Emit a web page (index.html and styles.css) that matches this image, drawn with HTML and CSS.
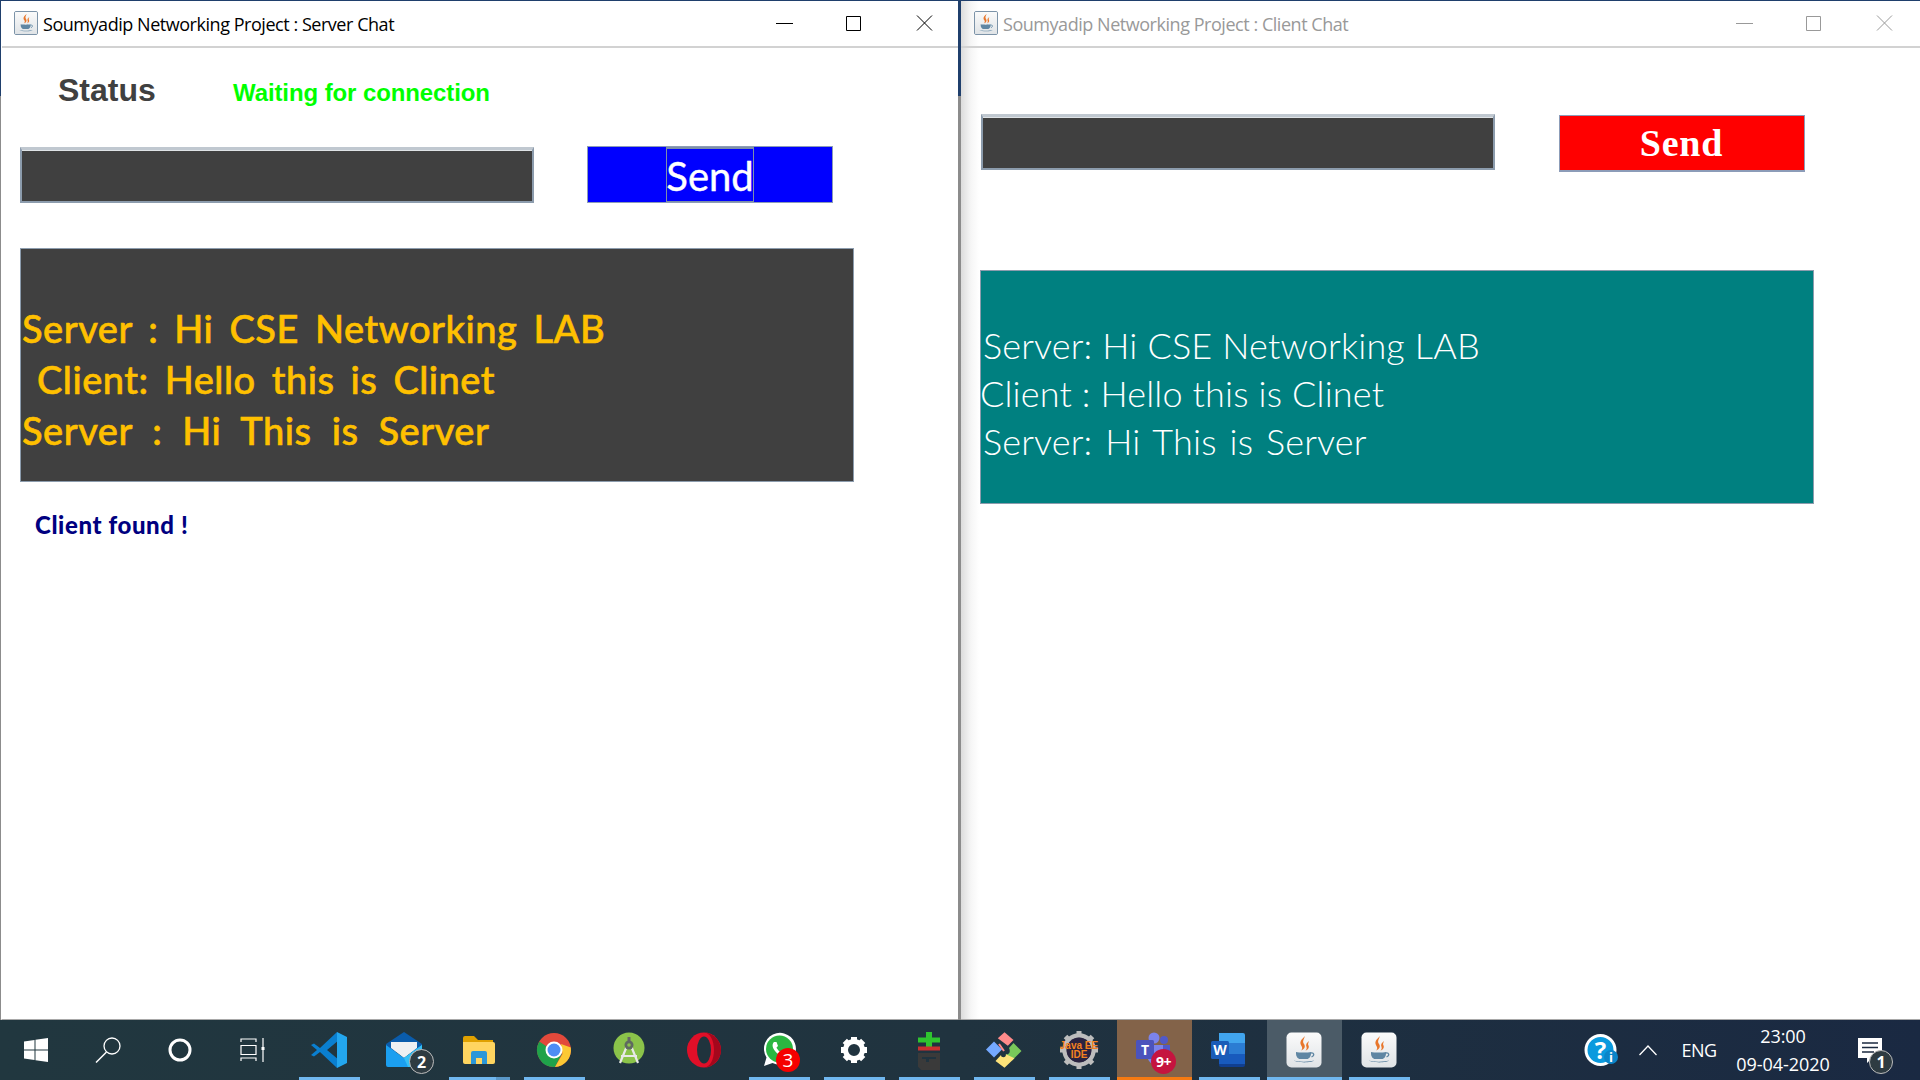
FILE: index.html
```html
<!DOCTYPE html>
<html lang="en">
<head>
<meta charset="utf-8">
<title>Soumyadip Networking Project</title>
<link rel="stylesheet" href="styles.css">
</head>
<body>
<svg class="defs" width="0" height="0" aria-hidden="true">
  <defs>
    <linearGradient id="javaBg" x1="0" y1="0" x2="0" y2="1"><stop offset="0" stop-color="#fbfbfb"/><stop offset="1" stop-color="#dfe3e6"/></linearGradient>
    <symbol id="java" viewBox="0 0 36 36">
      <rect x="0.5" y="0.5" width="35" height="35" rx="5" fill="url(#javaBg)"/>
      <path d="M19 4c-4 4-6 6-3.500 10 1 1.500 1 3-.5 4.500 3-1 5-3.500 3-6.500-2-2.500 0-5 1-8z" fill="#e8762b"/>
      <path d="M23 9c-2.500 2-3.500 3.500-2.500 6 .5 1.500 0 2.500-1 3.500 2.500-.5 4-3 3-5-1-1.500 0-3 .5-4.500z" fill="#e8762b"/>
      <path d="M10 20c3 .8 12 .8 15 0v1.500c0 3-2 5.500-4 5.500h-7c-2 0-4-2.500-4-5.500z" fill="#5f86a3"/>
      <path d="M25 21c3-.5 4 2.500.5 4" fill="none" stroke="#5f86a3" stroke-width="1.300"/>
      <path d="M8 28.500c4 1.500 15 1.500 20 0-2 2.500-17 2.500-20 0z" fill="#5f86a3"/>
    </symbol>
  </defs>
</svg>

<div class="screen">
  <main class="windows">
    <section class="window window-server">
      <header class="titlebar">
        <span class="app-icon"><svg width="24" height="24"><use href="#java"/></svg></span>
        <h1 class="title">Soumyadip Networking Project : Server Chat</h1>
        <div class="controls">
          <svg width="17" height="16" viewBox="0 0 17 16"><path d="M0 8.500h17" stroke="currentColor" fill="none"/></svg>
          <svg width="17" height="16" viewBox="0 0 17 16"><path d="M.5 1.500h14v14H.5z" stroke="currentColor" fill="none"/></svg>
          <svg width="17" height="16" viewBox="0 0 17 16"><path d="M1 .5l15 15M16 .5l-15 15" stroke="currentColor" fill="none"/></svg>
        </div>
      </header>
      <div class="status-row">
        <span class="status-label">Status</span>
        <span class="status-value">Waiting for connection</span>
      </div>
      <div class="send-row">
        <div class="field"></div>
        <button class="send send-blue" type="button"><span class="focus">Send</span></button>
      </div>
      <div class="log log-dark">
        <p class="line">Server : Hi CSE Networking LAB</p>
        <p class="line line-indent">Client: Hello this is Clinet</p>
        <p class="line line-wide">Server : Hi This is Server</p>
      </div>
      <p class="found">Client found !</p>
    </section>

    <section class="window window-client">
      <header class="titlebar">
        <span class="app-icon"><svg width="24" height="24"><use href="#java"/></svg></span>
        <h1 class="title">Soumyadip Networking Project : Client Chat</h1>
        <div class="controls">
          <svg width="17" height="16" viewBox="0 0 17 16"><path d="M0 8.500h17" stroke="currentColor" fill="none"/></svg>
          <svg width="17" height="16" viewBox="0 0 17 16"><path d="M.5 1.500h14v14H.5z" stroke="currentColor" fill="none"/></svg>
          <svg width="17" height="16" viewBox="0 0 17 16"><path d="M1 .5l15 15M16 .5l-15 15" stroke="currentColor" fill="none"/></svg>
        </div>
      </header>
      <div class="send-row send-row-client">
        <div class="field"></div>
        <button class="send send-red" type="button">Send</button>
      </div>
      <div class="log log-teal">
        <p class="line">Server: Hi CSE Networking LAB</p>
        <p class="line line-flush">Client : Hello this is Clinet</p>
        <p class="line line-wide">Server: Hi This is Server</p>
      </div>
    </section>
  </main>

  <footer class="taskbar">
    <div class="sys">
      <svg width="24" height="24" viewBox="0 0 24 24"><path d="M0 3.500L10.500 2v9.500H0zM11.500 1.800L24 0v11.500H11.500zM0 12.500h10.500V22L0 20.500zM11.500 12.500H24V24l-12.500-1.800z" fill="#fff"/></svg>
    </div>
    <div class="sys">
      <svg width="26" height="26" viewBox="0 0 26 26"><circle cx="17" cy="9" r="8" fill="none" stroke="#fff" stroke-width="1.300"/><path d="M11.500 15L1 25.500" stroke="#fff" stroke-width="1.500"/></svg>
    </div>
    <div class="sys">
      <svg width="26" height="26" viewBox="0 0 26 26"><circle cx="13" cy="13" r="10" fill="none" stroke="#fff" stroke-width="3"/></svg>
    </div>
    <div class="sys">
      <svg width="26" height="26" viewBox="0 0 26 26" fill="none" stroke="#fff" stroke-width="1.200"><path d="M2 5V2h15v3M2 8.500h15v9H2zM2 24v-3h15v3M24 1v24"/><rect x="22.500" y="10" width="3" height="3" fill="#fff" stroke="none"/></svg>
    </div>

    <div class="app on">
      <svg width="40" height="40" viewBox="0 0 40 40">
        <path d="M28 2L11 18 5 13.500 2 15l6 5-6 5 3 1.500L11 22l17 16 2-8-12-10 12-10z" fill="#0a7fd0"/>
        <path d="M28 2l10 5v26l-10 5z" fill="#23a6ee"/>
      </svg>
    </div>
    <div class="app">
      <svg width="40" height="40" viewBox="0 0 40 40">
        <path d="M2 14L20 2l18 12v8H2z" fill="#0a5cab"/>
        <path d="M7 12h26v6l-13 10-13-10z" fill="#eef0f2"/>
        <path d="M2 15l18 13 18-13v22H4a2 2 0 0 1-2-2z" fill="#1b9ff0"/>
        <path d="M38 15v22H24l-4-9z" fill="#35c0f5"/>
      </svg>
      <span class="badge badge-dark">2</span>
    </div>
    <div class="app on on-stack">
      <svg width="40" height="40" viewBox="0 0 40 40">
        <path d="M4 8a2 2 0 0 1 2-2h9l4 4h15v3H4z" fill="#e0a100"/>
        <path d="M4 12h30a2 2 0 0 1 2 2v18a2 2 0 0 1-2 2H6a2 2 0 0 1-2-2z" fill="#ffd560"/>
        <path d="M12 34V23a2 2 0 0 1 2-2h12a2 2 0 0 1 2 2v11h-5v-6h-6v6z" fill="#2b97d8"/>
      </svg>
    </div>
    <div class="app on">
      <svg width="40" height="40" viewBox="0 0 40 40">
        <circle cx="20" cy="20" r="17" fill="#e2493b"/>
        <path d="M5.300 11.500A17 17 0 0 0 21 37l7-13.500H14z" fill="#1fa24a"/>
        <path d="M36.800 17.500A17 17 0 0 1 21 37l7.500-13L27 14z" fill="#fcc934"/>
        <path d="M5.300 11.500L13 24l8 0-6-6z" fill="#1fa24a"/>
        <circle cx="20" cy="20" r="8.500" fill="#fff"/>
        <circle cx="20" cy="20" r="6.500" fill="#4e8df5"/>
      </svg>
    </div>
    <div class="app">
      <svg width="40" height="40" viewBox="0 0 40 40">
        <circle cx="20" cy="18" r="15.500" fill="#8bc34a"/>
        <path d="M20 11l-9 22M20 11l9 22M12 26h16" fill="none" stroke="#e8e8e8" stroke-width="2.200"/>
        <path d="M20 7v4" stroke="#666" stroke-width="3"/>
        <circle cx="20" cy="15" r="4.500" fill="#5f6a60"/>
        <circle cx="20" cy="15" r="1.800" fill="#8bc34a"/>
      </svg>
    </div>
    <div class="app">
      <svg width="40" height="40" viewBox="0 0 40 40">
        <ellipse cx="20" cy="20" rx="17" ry="17.500" fill="#e00f28"/>
        <ellipse cx="20" cy="20" rx="7" ry="13.500" fill="#20333d"/>
        <path d="M20 2.500c9 0 17 8 17 17.500s-8 17.500-17 17.500c6 0 10-8 10-17.500S26 2.500 20 2.500z" fill="#a4071c"/>
      </svg>
    </div>
    <div class="app on">
      <svg width="40" height="40" viewBox="0 0 40 40">
        <path d="M5 36l2.500-8.500A16 16 0 1 1 13.500 33z" fill="#fff"/>
        <circle cx="20.500" cy="19" r="13.500" fill="#2bb741"/>
        <path d="M15 12c-2 2-2 5 1 9s7 6 10 5c2-1 2-3 1.500-3.500L24 21l-1.500 1.500c-2-.5-4.500-3.500-5-5L19 16l-1.500-4z" fill="#fff"/>
      </svg>
      <span class="badge badge-red">3</span>
    </div>
    <div class="app on">
      <svg width="40" height="40" viewBox="0 0 40 40">
        <g fill="none" stroke="#fff"><circle cx="20" cy="20" r="8.500" stroke-width="5"/><path d="M20 7v4M20 29v4M7 20h4M29 20h4M10.800 10.800l2.800 2.800M26.400 26.400l2.800 2.800M29.200 10.800l-2.800 2.800M13.600 26.400l-2.800 2.800" stroke-width="6"/></g>
      </svg>
    </div>
    <div class="app on">
      <svg width="40" height="40" viewBox="0 0 40 40">
        <path d="M17 2h6v5.500h8v5h-8V17h-6v-4.500H9v-5h8z" fill="#2fc42f"/>
        <rect x="9" y="16.500" width="22" height="4" fill="#c93030"/>
        <path d="M11 25h18v13H13l-2-2zM15 29v5h10v-3h-5" fill="none" stroke="#3a3a3a" stroke-width="4"/>
      </svg>
    </div>
    <div class="app on">
      <svg width="40" height="40" viewBox="0 0 40 40">
        <path d="M2 19.500l8-8 8 8-8 8z" fill="#74a9ff"/>
        <path d="M13.800 8.300l6.700-6 9 7.700-5.700 5.700z" fill="#ff8b8b"/>
        <path d="M29.500 13l8 8-9.500 9.500-6.500-6c3.500.5 5.500-2.500 3.500-6.500z" fill="#79c85a"/>
        <path d="M11.500 31l9 6.700 10-9.400-8.500-4c0 2-1 3-2.500 3s-2.500-1-2.500-2.300z" fill="#fde27a"/>
        <path d="M15 14l5 7" stroke="#ff8b8b" stroke-width="2"/>
      </svg>
    </div>
    <div class="app on">
      <svg width="40" height="40" viewBox="0 0 40 40">
        <circle cx="20" cy="20" r="14.500" fill="none" stroke="#bdbdbd" stroke-width="4.500"/>
        <path d="M20 1v5M20 34v5M1 20h5M34 20h5M6.500 6.500l3.500 3.500M30 30l3.500 3.500M33.500 6.500L30 10M10 30l-3.500 3.500" stroke="#bdbdbd" stroke-width="5"/>
        <circle cx="20" cy="20" r="12.500" fill="#2a2340"/>
        <text class="ee" x="20" y="18.500">Java EE</text>
        <text class="ee" x="20" y="27.500">IDE</text>
      </svg>
    </div>
    <div class="app active">
      <svg width="40" height="40" viewBox="0 0 40 40">
        <circle cx="20" cy="8" r="5.500" fill="#7b83eb"/>
        <circle cx="30" cy="10" r="4" fill="#5059c9"/>
        <path d="M14 15h15v14a8 8 0 0 1-15 0z" fill="#7b83eb"/>
        <path d="M29 15h7v11a6 6 0 0 1-7 5z" fill="#5059c9"/>
        <rect x="2" y="10" width="18" height="19" rx="1.500" fill="#4b53bc"/>
        <text class="team-t" x="11" y="25">T</text>
      </svg>
      <span class="badge badge-team">9+</span>
    </div>
    <div class="app on">
      <svg width="40" height="40" viewBox="0 0 40 40">
        <path d="M10 3h24a2 2 0 0 1 2 2v8H10z" fill="#41a5ee"/>
        <rect x="10" y="13" width="26" height="11" fill="#2b7cd3"/>
        <rect x="10" y="24" width="26" height="10" fill="#185abd"/>
        <path d="M10 34h26v1a2 2 0 0 1-2 2H12a2 2 0 0 1-2-2z" fill="#103f91"/>
        <rect x="2" y="11" width="18" height="18" rx="1.500" fill="#1a5cb8"/>
        <text class="team-t" x="11" y="25">W</text>
      </svg>
    </div>
    <div class="app on current">
      <svg width="36" height="36"><use href="#java"/></svg>
    </div>
    <div class="app on">
      <svg width="36" height="36"><use href="#java"/></svg>
    </div>

    <div class="tray">
      <div class="tray-help">
        <svg width="40" height="40" viewBox="0 0 40 40">
          <circle cx="19.500" cy="20" r="14.500" fill="#0a9ade" stroke="#fff" stroke-width="3"/>
          <text class="help-q" x="19.500" y="28.500">?</text>
          <circle cx="30" cy="27" r="7" fill="#0a85c9"/>
          <text class="help-i" x="30" y="32">i</text>
        </svg>
      </div>
      <div class="tray-chevron">
        <svg width="20" height="12" viewBox="0 0 20 12"><path d="M1.500 11L10 2l8.500 9" fill="none" stroke="#fff" stroke-width="1.300"/></svg>
      </div>
      <div class="tray-lang">ENG</div>
      <div class="clock">
        <span>23:00</span>
        <span>09-04-2020</span>
      </div>
      <div class="notify">
        <svg width="26" height="26" viewBox="0 0 26 26"><path d="M1 1h24v20H15l-5 5v-5H1z" fill="#fff"/><path d="M5 6h16M5 10.500h16M5 15h12" stroke="#1b2a40" stroke-width="1.300"/></svg>
        <span class="badge badge-dark badge-note">1</span>
      </div>
    </div>
  </footer>
</div>
</body>
</html>
```

FILE: styles.css
```css
* { box-sizing: border-box; }

html, body { margin: 0; padding: 0; }

body {
  width: 1920px;
  height: 1080px;
  overflow: hidden;
  font-family: "Open Sans", "Liberation Sans", sans-serif;
}

.defs { position: absolute; }

.screen {
  display: flex;
  flex-direction: column;
  height: 1080px;
}

/* windows */
.windows {
  display: flex;
  height: 1020px;
  gap: 3px;
  padding: 1px 0 0 1px;
  background: linear-gradient(#1f3f6c 0 96px, #8c8c8c 96px);
}

.window {
  display: flex;
  flex-direction: column;
  height: 100%;
  background: #fff;
  border-bottom: 1px solid #a8a8a8;
}

.window-server {
  width: 957px;
  border-left: 1px solid #fff;
}

.window-client {
  width: 959px;
  background: linear-gradient(90deg, #dcdcdc, #f6f6f6 10px, #fff 18px);
}

.titlebar {
  display: flex;
  align-items: center;
  flex: 0 0 47px;
  border-bottom: 2px solid #d2d2d2;
  padding: 0 25px 2px 12px;
}

.window-client .titlebar {
  padding: 0 27px 2px 13px;
  color: #999;
}

.app-icon {
  display: flex;
  width: 24px;
  height: 24px;
  border: 1px solid #7c93a8;
  border-radius: 2px;
  overflow: hidden;
}

.app-icon svg { margin: -1px; }

.title {
  flex: 1;
  margin: 0 0 0 5px;
  padding-top: 2px;
  font-size: 18px;
  font-weight: 400;
  letter-spacing: -0.46px;
  white-space: nowrap;
}

.controls {
  display: flex;
  gap: 53px;
}

/* server status */
.status-row {
  display: flex;
  align-items: center;
  height: 72px;
  margin-top: 6px;
  padding-left: 56px;
}

.status-label {
  width: 175px;
  font: 700 32px/1 "Liberation Sans", Arial, sans-serif;
  color: #404040;
}

.status-value {
  font: 700 24px/1 "Liberation Sans", Arial, sans-serif;
  color: #00ff00;
  padding-top: 6px;
  letter-spacing: -0.1px;
}

/* input + send */
.send-row {
  display: flex;
  padding-left: 18px;
  margin-top: 21px;
  height: 57px;
}

.send-row-client {
  padding-left: 20px;
  margin-top: 66px;
}

.field {
  width: 514px;
  height: 56px;
  background: #404040;
  border: 2px solid #8c9cad;
  border-top: 3px solid #c0c8d0;
  box-shadow: inset 0 1px 0 #dfe3e6;
}

.send {
  display: flex;
  align-items: center;
  justify-content: center;
  width: 246px;
  height: 57px;
  margin-left: 53px;
  padding: 0;
  border: 1px solid #8c9cb8;
  color: #fff;
}

.send-blue {
  margin-top: -1px;
  background: #0000ff;
  font: 40px/1 "Lato", sans-serif;
  -webkit-text-stroke: 0.4px #fff;
}

.send-red {
  margin-top: 1px;
  margin-left: 63.5px;
  background: #ff0000;
  font: 700 38px/1 "Liberation Serif", serif;
  letter-spacing: 0.8px;
  border-bottom-width: 2px;
}

.focus {
  display: flex;
  align-items: center;
  justify-content: center;
  width: 88px;
  height: 100%;
  padding-top: 2px;
  border: 1px solid #7d8fa8;
  border-top-width: 2px;
}

/* message logs */
.log {
  display: flex;
  flex-direction: column;
  justify-content: center;
  width: 834px;
  border: 1px solid #8c9cad;
}

.log-dark {
  height: 234px;
  margin: 44px 0 0 18px;
  padding: 28px 0 0 1px;
  background: #404040;
  color: #ffc000;
  font: 500 38px/51px "Lato", "Noto Sans", sans-serif;
  -webkit-text-stroke: 0.6px #ffc000;
  letter-spacing: 0.5px;
  word-spacing: 6px;
}

.log-teal {
  height: 234px;
  margin: 99px 0 0 19px;
  padding: 11px 0 0 2px;
  background: #008080;
  color: #fff;
  font: 300 36px/48px "Lato", "Noto Sans", sans-serif;
  letter-spacing: 0.15px;
}

.line {
  margin: 0;
  white-space: nowrap;
}

.line-indent { padding-left: 15px; }

.line-flush { margin-left: -3px; }

.log-teal .line-wide { word-spacing: 3px; }

.log-dark .line-wide { word-spacing: 10px; }

.found {
  margin: 28px 0 0 33px;
  font: 900 24px/30px "Lato", sans-serif;
  color: #000080;
  letter-spacing: 0.6px;
}

/* taskbar */
.taskbar {
  display: flex;
  align-items: center;
  height: 60px;
  background: linear-gradient(90deg, #21373f, #20333f 50%, #1a2942);
  color: #fff;
}

.sys {
  display: flex;
  align-items: center;
  justify-content: center;
  width: 72px;
  height: 60px;
}

.sys:nth-child(4) { margin-right: 4px; }

.app {
  position: relative;
  display: flex;
  align-items: center;
  justify-content: center;
  width: 75px;
  height: 60px;
  padding-right: 2px;
}

.app.on::after {
  content: "";
  position: absolute;
  left: 7px;
  right: 7px;
  bottom: 0;
  height: 3px;
  background: #70b7ef;
}

.on-stack::before {
  content: "";
  position: absolute;
  right: 7px;
  bottom: 0;
  z-index: 1;
  width: 14px;
  height: 3px;
  background: #5a98c8;
}

.app.active {
  background: #836349;
}

.app.active::after {
  content: "";
  position: absolute;
  left: 0;
  right: 0;
  bottom: 0;
  height: 3px;
  background: #f67a12;
}

.app.current { background: #4b5b67; }

.app.current::after { left: 0; right: 0; }

.badge {
  position: absolute;
  display: flex;
  align-items: center;
  justify-content: center;
  border-radius: 50%;
  color: #fff;
  font-family: "Open Sans", sans-serif;
}

.badge-dark {
  left: 42px;
  top: 29px;
  width: 25px;
  height: 25px;
  background: #2e3b42;
  border: 1.500px solid #bdbdbd;
  font-size: 16px;
  font-weight: 700;
}

.badge-red {
  left: 34px;
  top: 28px;
  width: 24px;
  height: 24px;
  background: #f50000;
  font-size: 19px;
}

.badge-team {
  left: 34px;
  top: 29px;
  width: 25px;
  height: 25px;
  background: #c5143f;
  font-size: 14px;
  font-weight: 700;
  letter-spacing: -0.5px;
}

.ee {
  text-anchor: middle;
  font: 700 10px "Liberation Sans", sans-serif;
  fill: #f5821f;
}

.team-t {
  text-anchor: middle;
  font: 700 14px "Open Sans", sans-serif;
  fill: #fff;
}

.tray {
  display: flex;
  align-items: center;
  height: 60px;
  margin-left: 161px;
}

.tray-help {
  display: flex;
  justify-content: center;
  width: 46px;
}

.help-q {
  text-anchor: middle;
  font: 700 24px "Open Sans", sans-serif;
  fill: #fff;
}

.help-i {
  text-anchor: middle;
  font: 700 13px "Open Sans", sans-serif;
  fill: #fff;
}

.tray-chevron {
  display: flex;
  justify-content: center;
  width: 48px;
}

.tray-lang {
  width: 54px;
  text-align: center;
  font-size: 18px;
  letter-spacing: -0.6px;
}

.clock {
  display: flex;
  flex-direction: column;
  align-items: center;
  width: 114px;
  font-size: 18px;
  line-height: 28px;
  letter-spacing: -0.05px;
}

.notify {
  position: relative;
  display: flex;
  justify-content: center;
  width: 60px;
}

.badge-note {
  left: 29px;
  top: 13px;
  width: 24px;
  height: 24px;
}
```
